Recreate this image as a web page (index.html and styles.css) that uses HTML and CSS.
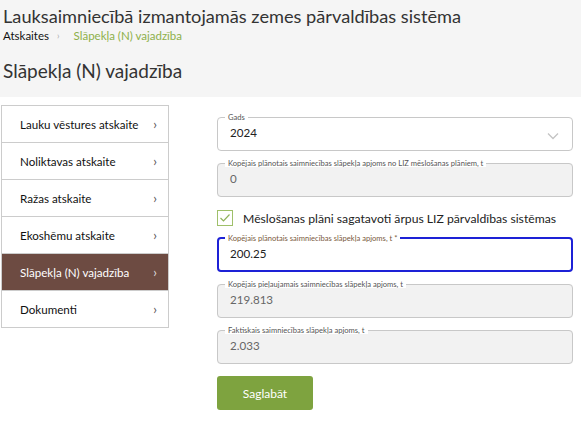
FILE: index.html
```html
<!DOCTYPE html>
<html lang="lv">
  <head>
    <title>Slāpekļa (N) vajadzība</title>
    <meta charset="UTF-8">
    <link rel="stylesheet" href="styles.css">
  </head>
  <body>
    <div class="top">
        <h1>Lauksaimniecībā izmantojamās zemes pārvaldības sistēma</h1>
        <div class="crumbs">
            <a href="#">Atskaites</a>
            <span class="sep">›</span>
            <span class="current">Slāpekļa (N) vajadzība</span>
        </div>
        <h2>Slāpekļa (N) vajadzība</h2>
    </div>
    <div class="container">
        <ul class="menu">
            <li><a href="#">Lauku vēstures atskaite <span class="arr">›</span></a></li>
            <li><a href="#">Noliktavas atskaite <span class="arr">›</span></a></li>
            <li><a href="#">Ražas atskaite <span class="arr">›</span></a></li>
            <li><a href="#">Ekoshēmu atskaite <span class="arr">›</span></a></li>
            <li class="active"><a href="#">Slāpekļa (N) vajadzība <span class="arr">›</span></a></li>
            <li><a href="#">Dokumenti <span class="arr">›</span></a></li>
        </ul>
        <form class="form">
            <fieldset class="field">
                <legend>Gads</legend>
                <div class="value">2024</div>
                <svg class="caret" width="12" height="8" viewBox="0 0 12 8"><path d="M1 1.5l5 5 5-5" fill="none" stroke="#c4c4c4" stroke-width="1.3"/></svg>
            </fieldset>
            <fieldset class="field off">
                <legend>Kopējais plānotais saimniecības slāpekļa apjoms no LIZ mēslošanas plāniem, t</legend>
                <div class="value">0</div>
            </fieldset>
            <label class="check">
                <span class="box"><svg width="12" height="10" viewBox="0 0 12 10"><path d="M1.5 5l3 3 6-6.5" fill="none" stroke="#8fb25a" stroke-width="1.2"/></svg></span>
                Mēslošanas plāni sagatavoti ārpus LIZ pārvaldības sistēmas
            </label>
            <fieldset class="field focus">
                <legend>Kopējais plānotais saimniecības slāpekļa apjoms, t *</legend>
                <div class="value">200.25</div>
            </fieldset>
            <fieldset class="field off">
                <legend>Kopējais pieļaujamais saimniecības slāpekļa apjoms, t</legend>
                <div class="value">219.813</div>
            </fieldset>
            <fieldset class="field off">
                <legend>Faktiskais saimniecības slāpekļa apjoms, t</legend>
                <div class="value">2.033</div>
            </fieldset>
            <button type="button" class="save">Saglabāt</button>
        </form>
    </div>
  </body>
</html>
```
FILE: styles.css
```css
*{
    margin: 0;
    padding: 0;
    box-sizing: border-box;
}
body{
    font-family: Lato, "Noto Sans", sans-serif;
    color: #222;
    background: #fff;
}
.top{
    background: #f5f5f5;
    height: 97px;
    padding: 3px 3px 0;
}
h1{
    font-size: 18.2px;
    font-weight: 400;
    line-height: 26px;
    color: #333;
}
.crumbs{
    font-size: 11.5px;
    line-height: 14px;
    display: flex;
    align-items: center;
}
.crumbs a{
    color: #111;
    text-decoration: none;
}
.crumbs .sep{
    color: #aaa;
    font-size: 9px;
    margin: 0 14px 0 8px;
}
.crumbs .current{
    color: #8db04a;
}
h2{
    font-size: 19px;
    font-weight: 400;
    color: #333;
    margin-top: 16px;
}
.container{
    display: flex;
    padding-top: 8px;
}
.menu{
    list-style: none;
    width: 168px;
    margin-left: 1px;
    border: 1px solid #ccc;
    align-self: flex-start;
}
.menu li + li{
    border-top: 1px solid #ccc;
}
.menu a{
    display: flex;
    justify-content: space-between;
    align-items: center;
    height: 36px;
    padding: 0 11px 0 18px;
    font-size: 11.6px;
    color: #111;
    text-decoration: none;
}
.menu .arr{
    color: #555;
    font-size: 13px;
}
.menu .active a{
    background: #6d4b42;
    color: #fff;
}
.menu .active .arr{
    color: #ddd;
}
.form{
    width: 356px;
    margin: 8px 0 0 48px;
    display: flex;
    flex-direction: column;
    gap: 8px;
}
.field{
    position: relative;
    border: 1px solid #c8c8c8;
    border-radius: 4px;
    padding: 0 12px;
    height: 38px;
}
.field legend{
    font-size: 7.6px;
    color: #555;
    padding: 0 3px;
    margin-left: -5px;
    line-height: 8px;
}
.field .value{
    font-size: 11.6px;
    line-height: 22px;
    margin-top: 1px;
}
.field .caret{
    position: absolute;
    right: 13px;
    top: 11px;
}
.field.off{
    background: #f2f2f2;
}
.field.off legend{
    background: #fff;
}
.field.off .value{
    color: #666;
}
.field.focus{
    border: 2px solid #1d21d6;
    padding: 0 11px;
    height: 38px;
}
.field.focus legend{
    color: #7a5a40;
}
.check{
    display: flex;
    align-items: center;
    font-size: 12.2px;
    color: #222;
    gap: 10px;
    margin: 5px 0 0;
}
.check .box{
    width: 16px;
    height: 16px;
    border: 1px solid #9fc06a;
    display: flex;
    align-items: center;
    justify-content: center;
}
.save{
    align-self: flex-start;
    width: 96px;
    height: 34px;
    margin-top: 4px;
    border: none;
    border-radius: 3px;
    background: #7ea33f;
    color: #fff;
    font-family: inherit;
    font-size: 12px;
}
```
